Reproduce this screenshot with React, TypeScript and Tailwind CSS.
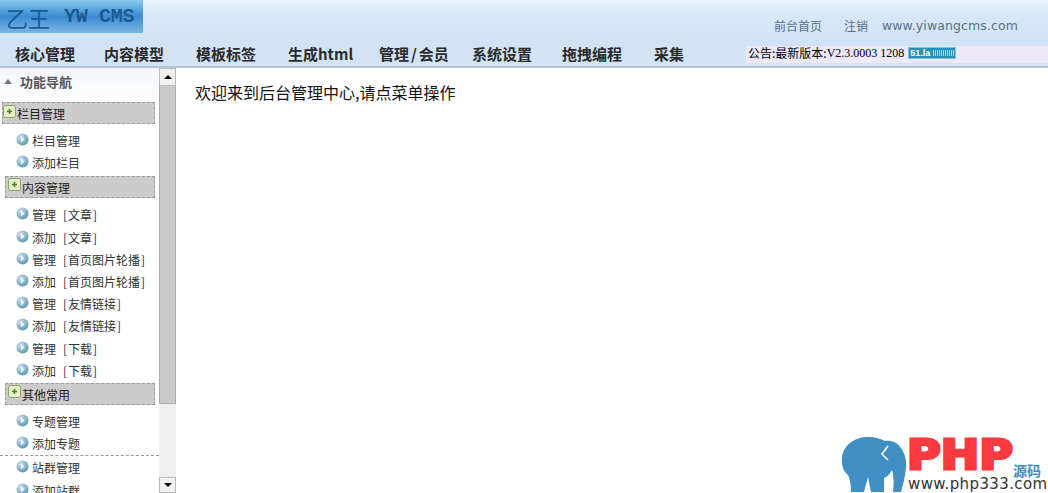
const cjk = { fontFamily: '"Noto Sans CJK SC", sans-serif' };

function Plus() {
  return (
    <svg width="13" height="13" viewBox="0 0 13 13" className="shrink-0">
      <rect x="0.5" y="0.5" width="12" height="12" rx="2" fill="#e4efc4" stroke="#8fa06a" />
      <path d="M6.5 4v5M4 6.5h5" stroke="#3f7f2a" strokeWidth="1.4" />
    </svg>
  );
}

function Bullet() {
  return (
    <svg width="13" height="13" viewBox="0 0 13 13" className="shrink-0">
      <defs>
        <radialGradient id="bl" cx="0.35" cy="0.3" r="0.8">
          <stop offset="0" stopColor="#cfe3ee" />
          <stop offset="1" stopColor="#4f8fb0" />
        </radialGradient>
      </defs>
      <circle cx="6.5" cy="6.5" r="6" fill="url(#bl)" />
      <path d="M5 3.5l3.5 3-3.5 3z" fill="#f4f9fb" />
    </svg>
  );
}

function Group({ label, ml, icon }: { label: string; ml: string; icon: string }) {
  return (
    <div className={`${ml} mr-[4px] flex h-[22px] items-start border border-dashed border-[#9a9a9a] bg-[#cccccc] text-[12px] leading-[21px] text-[#222]`}>
      <span className={icon}><Plus /></span>
      <span className="whitespace-nowrap">{label}</span>
    </div>
  );
}

function Item({ text, tag }: { text: string; tag?: string }) {
  return (
    <div className="flex h-[22.2px] items-center whitespace-nowrap pl-[16px] text-[12px] text-[#333]">
      <span className="-mt-[3px] mr-[3px]"><Bullet /></span>
      <span>{text}</span>
      {tag && (
        <span className="ml-[7px]">
          [<span className="mx-[1px]">{tag}</span>]
        </span>
      )}
    </div>
  );
}

function NavItem({ text, w }: { text: React.ReactNode; w: string }) {
  return <span className={`${w} shrink-0 whitespace-nowrap`}>{text}</span>;
}

export default function App() {
  return (
    <div className="relative flex h-[493px] w-[1048px] flex-col overflow-hidden bg-white" style={cjk}>
      <header className="h-[68px] shrink-0 border-b-2 border-[#b7c4d3] bg-[#d2e3f5]">
        <div className="flex h-[45px] items-start justify-between bg-gradient-to-b from-[#e8f3fc] via-[#d9e8f7] via-30% to-[#d0e2f5]">
          <div className="flex h-[33px] w-[143px] items-center bg-gradient-to-b from-[#86c8ee] via-[#3a8bd0] to-[#7cb6e6] pl-[6px] text-[#1a5a94]">
            <span className="text-[22px] leading-none">乙王</span>
            <span className="ml-[14px] text-[20px] font-bold leading-none" style={{ fontFamily: '"Liberation Mono", monospace', letterSpacing: '-0.3px' }}>YW CMS</span>
          </div>
          <div className="mt-[17px] flex items-center pr-[30px] text-[12px] leading-[18px] text-[#5b6f86]">
            <span>前台首页</span>
            <span className="ml-[22px]">注销</span>
            <span className="ml-[14px] tracking-[0.1px]" style={{ fontFamily: '"DejaVu Sans", sans-serif', fontSize: 12.5 }}>www.yiwangcms.com</span>
          </div>
        </div>
        <div className="flex h-[19px] items-center">
          <div className="flex flex-1 items-center pb-[1px] pl-[15px] text-[15px] font-bold leading-[18px] text-[#2a2a2a]">
            <NavItem text="核心管理" w="w-[89px]" />
            <NavItem text="内容模型" w="w-[92px]" />
            <NavItem text="模板标签" w="w-[92px]" />
            <NavItem text="生成html" w="w-[91px]" />
            <NavItem text={<>管理<span className="mx-[2px]">/</span>会员</>} w="w-[93px]" />
            <NavItem text="系统设置" w="w-[90px]" />
            <NavItem text="拖拽编程" w="w-[92px]" />
            <NavItem text="采集" w="w-[40px]" />
          </div>
          <div className="box-border flex h-[17px] w-[302px] items-center bg-[#ece8f8] pb-[3px] pl-[2px] text-[12px] leading-[14px] text-black">
            <span className="whitespace-nowrap">公告:最新版本:</span>
            <span className="whitespace-nowrap" style={{ fontFamily: '"Liberation Serif", serif' }}>V2.3.0003 1208</span>
            <span className="ml-[4px] flex h-[12px] w-[48px] items-center border border-[#7cc4dc] bg-[#2b8fb5] pl-[1px] text-[9px] font-bold leading-none text-white" style={{ fontFamily: '"Liberation Sans", sans-serif' }}>
              51.la
              <span className="ml-[3px] h-[6px] w-[22px] bg-[repeating-linear-gradient(90deg,#a8dcec_0,#a8dcec_1px,transparent_1px,transparent_2px)]" />
            </span>
          </div>
        </div>
      </header>

      <div className="flex min-h-0 flex-1">
        <aside className="flex w-[176px] shrink-0">
          <div className="relative w-[159px] shrink-0 overflow-hidden bg-white">
            <div className="flex h-[34px] items-start bg-gradient-to-b from-[#f2f6fa] to-white pl-[4px] pt-[5px] text-[13px] font-bold leading-[18px] text-[#555]">
              <span className="mr-[8px] mt-[6px] h-0 w-0 border-x-[4px] border-b-[5px] border-x-transparent border-b-[#777]" />
              功能导航
            </div>
            <Group label="栏目管理" ml="ml-[2px]" icon="mt-[2px] mr-[1px]" />
            <div className="mb-[2px] mt-[6px]">
              <Item text="栏目管理" />
              <Item text="添加栏目" />
            </div>
            <Group label="内容管理" ml="ml-[5px]" icon="ml-[2px] mt-[1px] mr-[1px]" />
            <div className="mb-[1px] mt-[6px]">
              <Item text="管理" tag="文章" />
              <Item text="添加" tag="文章" />
              <Item text="管理" tag="首页图片轮播" />
              <Item text="添加" tag="首页图片轮播" />
              <Item text="管理" tag="友情链接" />
              <Item text="添加" tag="友情链接" />
              <Item text="管理" tag="下载" />
              <Item text="添加" tag="下载" />
            </div>
            <Group label="其他常用" ml="ml-[5px]" icon="ml-[2px] mt-[1px] mr-[1px]" />
            <div className="mt-[6px] border-b border-dashed border-[#999]">
              <Item text="专题管理" />
              <Item text="添加专题" />
            </div>
            <div className="pt-[1px]">
              <Item text="站群管理" />
              <Item text="添加站群" />
            </div>
          </div>
          <div className="flex w-[17px] shrink-0 flex-col bg-[#eeeeee]">
            <div className="flex h-[18px] items-center justify-center border border-[#bbb] bg-[#f0f0f0]">
              <span className="h-0 w-0 border-x-[4px] border-b-[4px] border-x-transparent border-b-black" />
            </div>
            <div className="h-[318px] border-x border-b border-[#aaa] bg-[#c9c9c9]" />
            <div className="flex-1 bg-[#efefef]" />
            <div className="flex h-[16px] items-center justify-center border border-[#bbb] bg-[#f0f0f0]">
              <span className="h-0 w-0 border-x-[4px] border-t-[4px] border-x-transparent border-t-black" />
            </div>
          </div>
        </aside>
        <main className="flex-1 pl-[19px] pt-[12px] text-[16px] leading-[24px] text-[#111]">
          欢迎来到后台管理中心,请点菜单操作
        </main>
      </div>

      <div className="absolute left-[841px] top-[437px] h-[56px] w-[207px]">
        <svg width="66" height="56" viewBox="0 0 66 56" className="absolute left-0 top-0">
          <path d="M1 21C2 8 14 0 27 0c7 0 13 2 17 4 6-1 12 1 16 7 4 6 6 13 5 20-1 9-3 17-5 24h-8c1-9 1-15-1-22-3 5-5 7-8 8v14H30l-3-15-4 15H10c0-7-1-13-3-17-3-2-7-8-6-17z" fill="#3f8ec4" />
          <path d="M47 9l-6 8 6 6" fill="none" stroke="#fff" strokeWidth="1.6" />
        </svg>
        <span className="absolute left-[66px] top-[-2px] origin-left scale-x-[1.15] text-[40px] font-bold leading-[40px] text-[#f93a3f]" style={{ fontFamily: '"DejaVu Sans", sans-serif', WebkitTextStroke: '3px #f93a3f' }}>PHP</span>
        <span className="absolute left-[172px] top-[26px] whitespace-nowrap text-[14px] font-bold leading-[14px] text-[#3f8ec4]">源码</span>
        <span className="absolute left-[67px] top-[39px] whitespace-nowrap text-[15px] leading-[17px] tracking-[0.38px] text-[#333]" style={{ fontFamily: '"DejaVu Sans", sans-serif' }}>www.php333.com</span>
      </div>
    </div>
  );
}
